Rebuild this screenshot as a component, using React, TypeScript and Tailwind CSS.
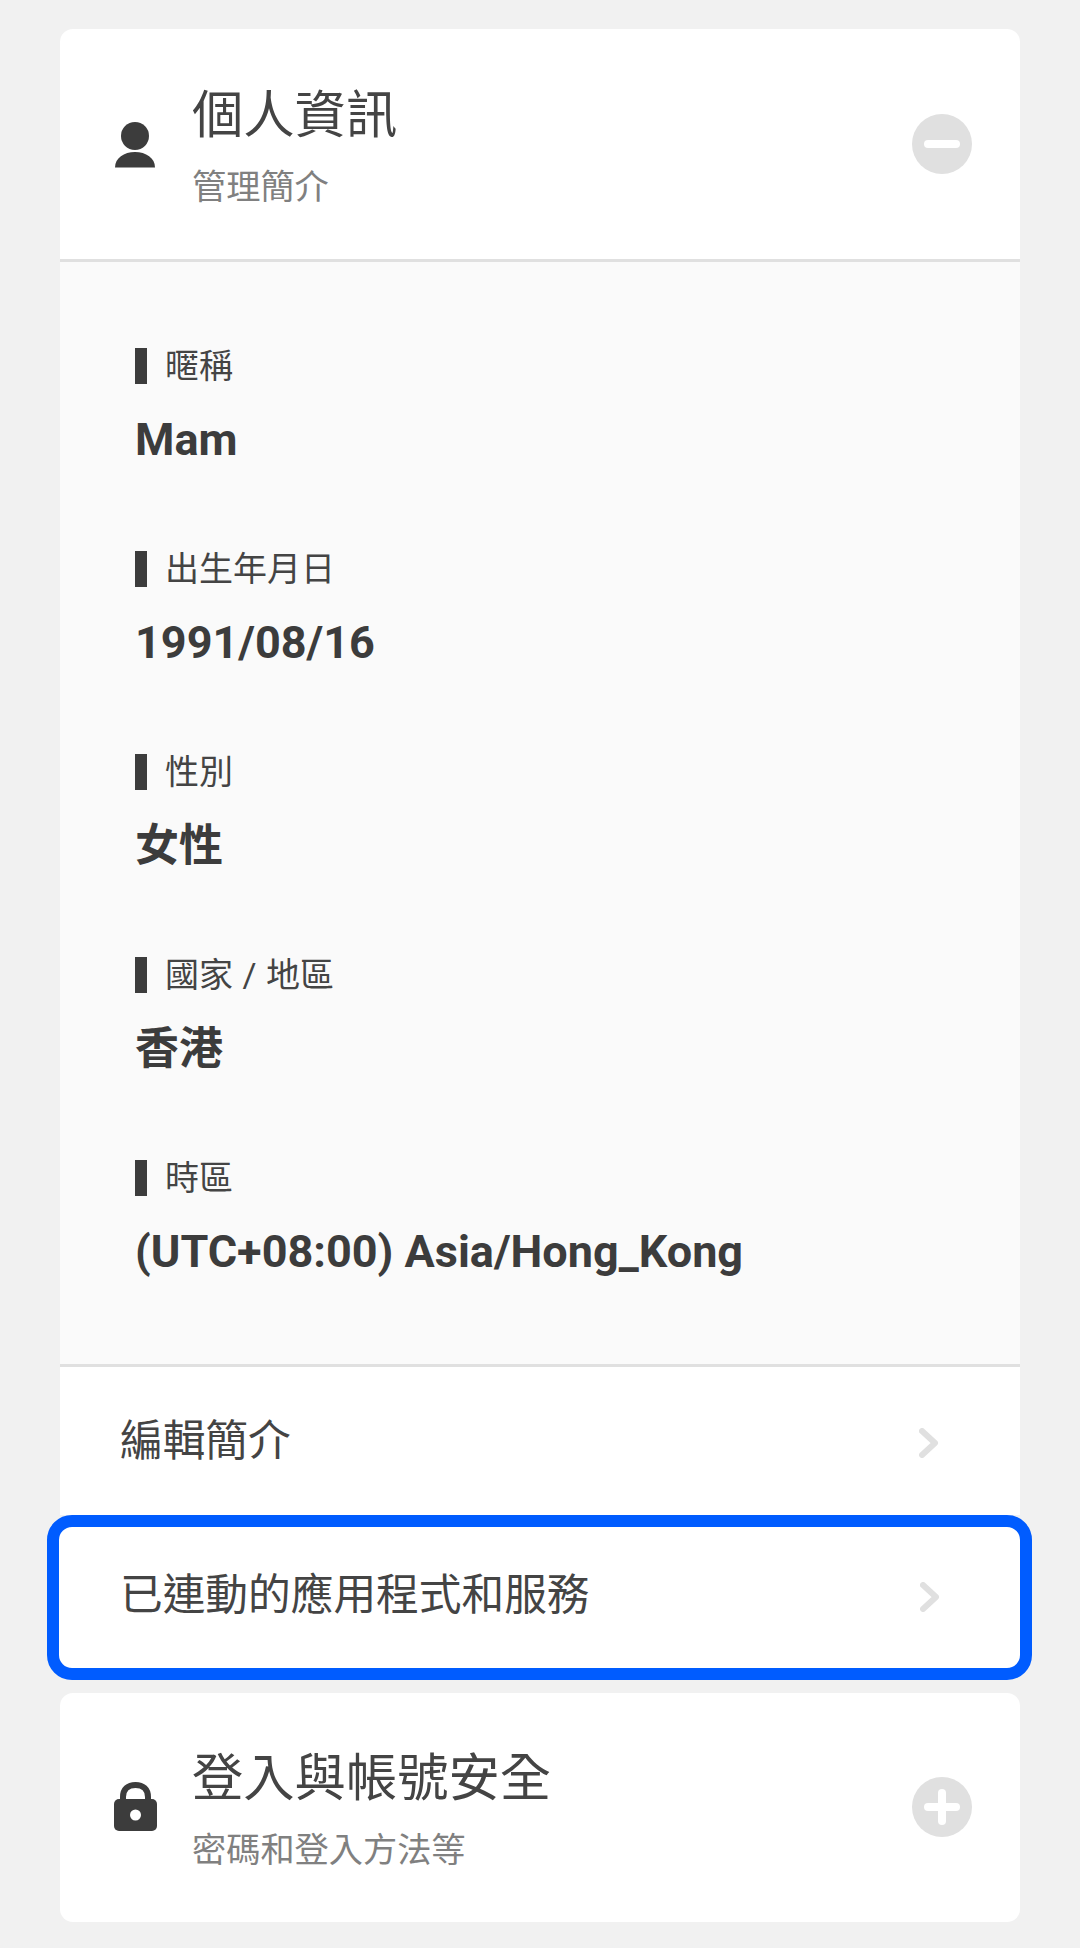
import React from 'react'

const fields = [
  { label: '暱稱', value: 'Mam', size: 'text-[45px]' },
  { label: '出生年月日', value: '1991/08/16', size: 'text-[45px]' },
  { label: '性別', value: '女性', size: 'text-[44px]' },
  { label: '國家 / 地區', value: '香港', size: 'text-[44px]' },
  { label: '時區', value: '(UTC+08:00) Asia/Hong_Kong', size: 'text-[45px]' },
]

function Chevron({ className }: { className: string }) {
  return (
    <svg width="20" height="30" viewBox="0 0 20 30" fill="none" className={`shrink-0 ${className}`}>
      <path d="M3 3 L16 15 L3 27" stroke="#e0e0e0" strokeWidth="6" strokeLinecap="round" strokeLinejoin="round" />
    </svg>
  )
}

function UserIcon() {
  return (
    <svg width="40" height="46" viewBox="0 0 40 46" className="mt-[2px] shrink-0">
      <circle cx="20" cy="14" r="14" fill="#3c3c3c" />
      <path d="M0 45.500 C0 36 9 30 20 30 C31 30 40 36 40 45.500 Z" fill="#3c3c3c" />
    </svg>
  )
}

function LockIcon() {
  return (
    <svg width="44" height="49" viewBox="0 0 44 49" className="-mt-[1px] ml-[2px] shrink-0">
      <path d="M9 22 V15 C9 7 14 3 21.500 3 C29 3 34 7 34 15 V22" fill="none" stroke="#3c3c3c" strokeWidth="6" />
      <rect x="0" y="17" width="43" height="32" rx="5" fill="#3c3c3c" />
      <circle cx="21.500" cy="33" r="5.500" fill="#fff" />
    </svg>
  )
}

function Header({ icon, title, sub, action }: { icon: React.ReactNode; title: string; sub: string; action: 'plus' | 'minus' }) {
  return (
    <div className="flex items-center pl-[53px] pr-[48px]">
      <div className="flex w-[44px] justify-center">{icon}</div>
      <div className="ml-[35px] flex-1 pt-[8px]">
        <div className="text-[51.300px] leading-[60px] text-[#444444]">{title}</div>
        <div className="mt-[18px] text-[34.200px] leading-[46px] text-[#808080]">{sub}</div>
      </div>
      <div className="relative h-[60px] w-[60px] rounded-full bg-[#e0e0e0]">
        <div className="absolute left-[12px] top-[26px] h-[8px] w-[36px] rounded-full bg-white" />
        {action === 'plus' && <div className="absolute left-[26px] top-[12px] h-[36px] w-[8px] rounded-full bg-white" />}
      </div>
    </div>
  )
}

export default function App() {
  return (
    <div
      className="h-[1948px] w-[1080px] overflow-hidden bg-[#f1f1f1] px-[60px] pt-[29px]"
      style={{ fontFamily: 'Roboto, "Noto Sans CJK TC", sans-serif' }}
    >
      <div className="rounded-t-[13px] bg-white">
        <div className="flex h-[230px] flex-col justify-center">
          <Header icon={<UserIcon />} title="個人資訊" sub="管理簡介" action="minus" />
        </div>
        <div className="border-y-[3px] border-[#e0e0e0] bg-[#fafafa] pb-[82px] pl-[75px] pt-[86px]">
          <div className="flex flex-col gap-[81px]">
            {fields.map((f) => (
              <div key={f.label}>
                <div className="flex items-center">
                  <div className="h-[36px] w-[12px] bg-[#3c3c3c]" />
                  <span className="ml-[18px] text-[34px] leading-[36px] text-[#444444] [word-spacing:1px]">{f.label}</span>
                </div>
                <div className={`mt-[26px] ${f.size} font-bold leading-[60px] text-[#3c3c3c]`}>{f.value}</div>
              </div>
            ))}
          </div>
        </div>
        <div className="flex h-[148px] items-center justify-between pl-[60px]">
          <span className="text-[42.700px] text-[#444444]">編輯簡介</span>
          <Chevron className="mr-[81px] mt-[3px]" />
        </div>
      </div>
      <div className="relative -ml-[13px] -mr-[12px] flex h-[165px] items-center justify-between rounded-[25px] border-[12px] border-[#005cff] bg-white pl-[61px]">
        <span className="-mt-[4px] text-[42.700px] text-[#444444]">已連動的應用程式和服務</span>
        <Chevron className="mr-[80px] -mt-[2px]" />
      </div>
      <div className="mt-[13px] flex h-[229px] flex-col justify-center rounded-[13px] bg-white pb-[2px]">
        <Header icon={<LockIcon />} title="登入與帳號安全" sub="密碼和登入方法等" action="plus" />
      </div>
    </div>
  )
}
